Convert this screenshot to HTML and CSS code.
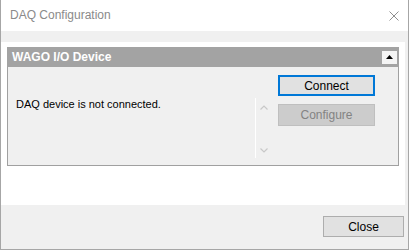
FILE: index.html
```html
<!DOCTYPE html>
<html>
<head>
<meta charset="utf-8">
<link rel="stylesheet" href="styles.css">
</head>
<body>
<div class="window">
  <div class="titlebar">
    <span class="title">DAQ Configuration</span>
    <svg class="close-x" width="10" height="10" viewBox="0 0 10 10"><path d="M0.5 0.5 L9.5 9.5 M9.5 0.5 L0.5 9.5" stroke="#8f8f8f" stroke-width="1" fill="none"/></svg>
  </div>
  <div class="strip"></div>
  <div class="panel">
    <div class="group">
      <div class="group-header">
        <span class="group-title">WAGO I/O Device</span>
        <span class="collapse-btn"><svg width="7" height="4" viewBox="0 0 7 4"><path d="M3.5 0 L7 4 L0 4 Z" fill="#000"/></svg></span>
      </div>
      <div class="group-body">
        <div class="status">DAQ device is not connected.</div>
        <div class="scroller">
          <svg class="chev" width="8" height="5" viewBox="0 0 8 5"><path d="M0.5 4.5 L4 1 L7.5 4.5" stroke="#c8c8c8" stroke-width="1.2" fill="none"/></svg>
          <svg class="chev" width="8" height="5" viewBox="0 0 8 5"><path d="M0.5 0.5 L4 4 L7.5 0.5" stroke="#c8c8c8" stroke-width="1.2" fill="none"/></svg>
        </div>
        <div class="buttons">
          <div class="btn btn-default">Connect</div>
          <div class="btn btn-disabled">Configure</div>
        </div>
      </div>
    </div>
  </div>
  <div class="footer">
    <div class="btn btn-close">Close</div>
  </div>
</div>
</body>
</html>
```
FILE: styles.css
```css
html, body {
  margin: 0;
  padding: 0;
  background: #ffffff;
}
.window {
  width: 409px;
  height: 250px;
  box-sizing: border-box;
  border: 1px solid #a6a6a6;
  border-top: none;
  display: flex;
  flex-direction: column;
  background: #f0f0f0;
  font-family: "Liberation Sans", Arial, sans-serif;
  font-size: 12px;
  color: #000;
}
.titlebar {
  height: 31px;
  flex: none;
  background: #ffffff;
  display: flex;
  align-items: center;
  padding-left: 9px;
  padding-right: 9px;
}
.title {
  flex: 1;
  color: #8a8a8a;
  font-size: 12px;
  padding-bottom: 1px;
}
.close-x {
  display: block;
}
.strip {
  height: 11px;
  flex: none;
  background: #f0f0f0;
}
.panel {
  flex: 1;
  background: #ffffff;
  margin-right: 3px;
  padding-top: 5px;
  padding-left: 6px;
}
.group {
  width: 392px;
}
.group-header {
  height: 20px;
  background: #a3a3a3;
  display: flex;
  align-items: center;
  padding-left: 5px;
  padding-right: 2px;
}
.group-title {
  flex: 1;
  color: #ffffff;
  font-weight: bold;
  font-size: 12px;
}
.collapse-btn {
  width: 15px;
  height: 13px;
  background: #f4f4f4;
  display: flex;
  align-items: center;
  justify-content: center;
}
.collapse-btn svg {
  display: block;
}
.group-body {
  height: 99px;
  box-sizing: border-box;
  background: #f0f0f0;
  border: 1px solid #a0a0a0;
  border-top: none;
  display: flex;
  align-items: flex-start;
  padding-left: 8px;
}
.status {
  width: 239px;
  margin-top: 30px;
  font-size: 11px;
  line-height: 14px;
}
.scroller {
  width: 23px;
  height: 60px;
  margin-top: 31px;
  border-left: 1px solid #ffffff;
  display: flex;
  flex-direction: column;
  justify-content: space-between;
  padding: 7px 0 5px 4px;
  box-sizing: border-box;
}
.chev {
  display: block;
}
.buttons {
  margin-top: 8px;
  display: flex;
  flex-direction: column;
  gap: 8px;
}
.btn {
  box-sizing: border-box;
  display: flex;
  align-items: center;
  justify-content: center;
  font-size: 12px;
}
.btn-default {
  width: 97px;
  height: 21px;
  background: #e1e1e1;
  border: 2px solid #0078d7;
}
.btn-disabled {
  width: 97px;
  height: 22px;
  background: #cccccc;
  border: 1px solid #bfbfbf;
  color: #838383;
}
.footer {
  height: 44px;
  flex: none;
  background: #f0f0f0;
  display: flex;
  justify-content: flex-end;
  align-items: flex-start;
  padding-top: 11px;
  padding-right: 4px;
  box-sizing: border-box;
}
.btn-close {
  width: 81px;
  height: 21px;
  background: #e1e1e1;
  border: 1px solid #adadad;
}
```
